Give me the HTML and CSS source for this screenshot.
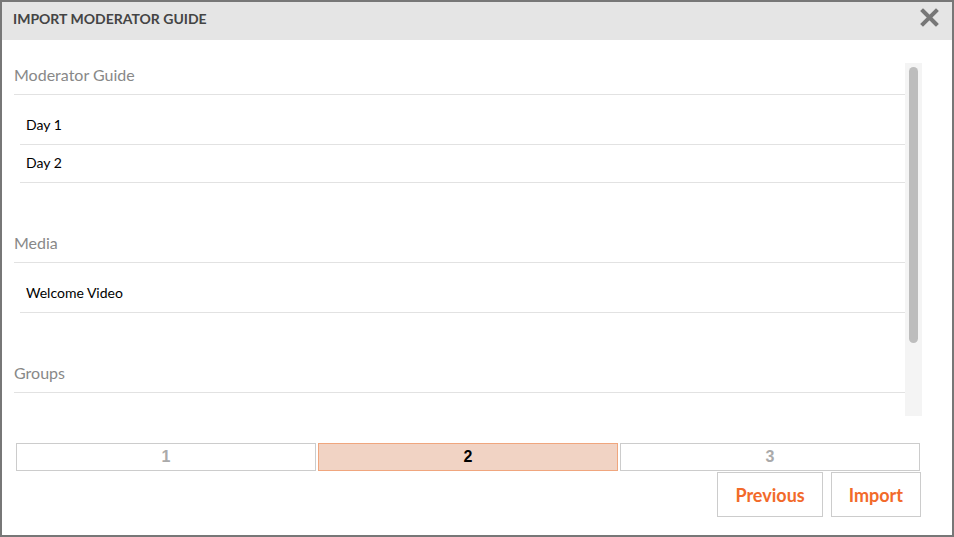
FILE: index.html
```html
<!DOCTYPE html>
<html lang="en">
<head>
    <meta charset="UTF-8">
    <meta name="viewport" content="width=device-width, initial-scale=1.0">
    <title>Import Moderator Guide</title>
    <link rel="stylesheet" href="styles.css">
</head>
<body>
    <div class="modal">
        <div class="modal-header">
            <h1 class="modal-title">IMPORT MODERATOR GUIDE</h1>
            <span class="close">
                <svg width="19" height="19" viewBox="0 0 19 19">
                    <path d="M3 3 L16 16 M16 3 L3 16" stroke="#777" stroke-width="4" stroke-linecap="square"/>
                </svg>
            </span>
        </div>
        <div class="modal-body">
            <div class="scroll-box">
                <div class="scroll-content">
                    <div class="section">
                        <div class="section-title">Moderator Guide</div>
                        <ul class="items">
                            <li>Day 1</li>
                            <li>Day 2</li>
                        </ul>
                    </div>
                    <div class="section">
                        <div class="section-title">Media</div>
                        <ul class="items">
                            <li>Welcome Video</li>
                        </ul>
                    </div>
                    <div class="section">
                        <div class="section-title">Groups</div>
                    </div>
                </div>
                <div class="scrollbar"><div class="thumb"></div></div>
            </div>
            <ul class="steps">
                <li>1</li>
                <li class="active">2</li>
                <li>3</li>
            </ul>
            <div class="actions">
                <button class="btn">Previous</button>
                <button class="btn">Import</button>
            </div>
        </div>
    </div>
</body>
</html>
```
FILE: styles.css
```css
*{
    padding: 0;
    margin: 0;
    box-sizing: border-box;
}
body{
    font-family: Lato, "Open Sans", sans-serif;
    background: #fff;
}
.modal{
    width: 954px;
    height: 537px;
    border: 2px solid #777;
    background: #fff;
    display: flex;
    flex-direction: column;
}
.modal-header{
    height: 38px;
    background: #e5e5e5;
    display: flex;
    align-items: center;
    justify-content: space-between;
    padding: 0 13px 0 11px;
}
.modal-title{
    font-size: 14px;
    font-weight: bold;
    color: #444;
    margin-top: -5px;
}
.close{
    display: flex;
    margin-top: -7px;
}
.modal-body{
    flex: 1;
    padding: 23px 30px 0 12px;
}
.scroll-box{
    display: flex;
    height: 353px;
}
.scroll-content{
    flex: 1;
    overflow: hidden;
}
.section{
    margin-bottom: 48px;
}
.section-title{
    font-size: 16px;
    line-height: 24px;
    color: #888;
    padding-bottom: 7px;
    border-bottom: 1px solid #e2e2e2;
}
.items{
    list-style: none;
    margin-left: 6px;
    padding-top: 12px;
}
.items li{
    height: 38px;
    line-height: 36px;
    padding-left: 6px;
    font-size: 14px;
    color: #000;
    border-bottom: 1px solid #e2e2e2;
}
.scrollbar{
    width: 17px;
    background: #f4f4f4;
    padding: 4px 4px 0 4px;
}
.scrollbar .thumb{
    height: 276px;
    width: 9px;
    background: #bdbdbd;
    border-radius: 5px;
}
.steps{
    list-style: none;
    display: flex;
    gap: 2px;
    margin: 27px 0 0 2px;
}
.steps li{
    width: 300px;
    height: 28px;
    border: 1px solid #ccc;
    text-align: center;
    line-height: 26px;
    font-family: "Liberation Sans", Arial, sans-serif;
    font-weight: bold;
    font-size: 16px;
    color: #aaa;
}
.steps li.active{
    background: #f1d3c4;
    border-color: #f0a67e;
    color: #000;
}
.actions{
    display: flex;
    justify-content: flex-end;
    gap: 8px;
    margin-top: 1px;
    padding-right: 1px;
}
.btn{
    height: 45px;
    padding: 0 17px;
    background: #fff;
    border: 1px solid #ccc;
    font-family: Lato, sans-serif;
    font-weight: bold;
    font-size: 18px;
    color: #f26a2a;
    cursor: pointer;
}
```
